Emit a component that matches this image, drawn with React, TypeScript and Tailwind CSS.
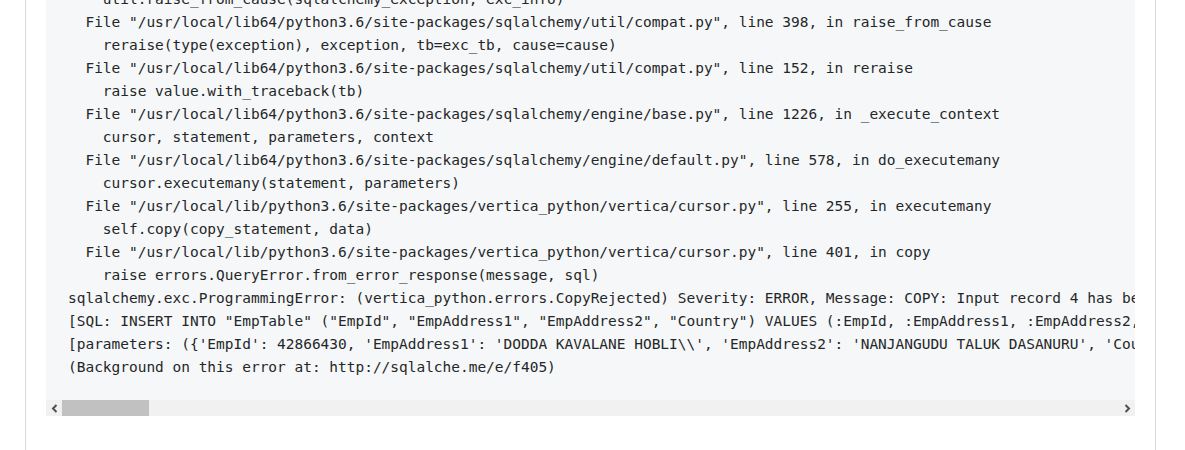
const lines = [
  "    util.raise_from_cause(sqlalchemy_exception, exc_info)",
  '  File "/usr/local/lib64/python3.6/site-packages/sqlalchemy/util/compat.py", line 398, in raise_from_cause',
  "    reraise(type(exception), exception, tb=exc_tb, cause=cause)",
  '  File "/usr/local/lib64/python3.6/site-packages/sqlalchemy/util/compat.py", line 152, in reraise',
  "    raise value.with_traceback(tb)",
  '  File "/usr/local/lib64/python3.6/site-packages/sqlalchemy/engine/base.py", line 1226, in _execute_context',
  "    cursor, statement, parameters, context",
  '  File "/usr/local/lib64/python3.6/site-packages/sqlalchemy/engine/default.py", line 578, in do_executemany',
  "    cursor.executemany(statement, parameters)",
  '  File "/usr/local/lib/python3.6/site-packages/vertica_python/vertica/cursor.py", line 255, in executemany',
  "    self.copy(copy_statement, data)",
  '  File "/usr/local/lib/python3.6/site-packages/vertica_python/vertica/cursor.py", line 401, in copy',
  "    raise errors.QueryError.from_error_response(message, sql)",
  "sqlalchemy.exc.ProgrammingError: (vertica_python.errors.CopyRejected) Severity: ERROR, Message: COPY: Input record 4 has been rejected (Too few columns found), Sqlstate: 22V04, Routine: bulkInsertRows, Error Code: 2035",
  '[SQL: INSERT INTO "EmpTable" ("EmpId", "EmpAddress1", "EmpAddress2", "Country") VALUES (:EmpId, :EmpAddress1, :EmpAddress2, :Country)]',
  "[parameters: ({'EmpId': 42866430, 'EmpAddress1': 'DODDA KAVALANE HOBLI\\\\', 'EmpAddress2': 'NANJANGUDU TALUK DASANURU', 'Country': 'INDIA'}, ...)]",
  "(Background on this error at: http://sqlalche.me/e/f405)",
];

export default function App() {
  return (
    <div className="w-full h-[450px] overflow-hidden bg-white">
      <div className="ml-[25px] w-[1131px] h-[480px] -mt-[12px] border-x border-[#d6d9dc] px-[20px]">
        {/* code block */}
        <div className="bg-[#f6f7f8]">
          <pre
            className="overflow-hidden px-[22px] pt-0 pb-[21px] text-[14.48px] leading-[23px] text-[#242729]"
            style={{ fontFamily: '"DejaVu Sans Mono", "Liberation Mono", monospace' }}
          >
            {lines.map((l, i) => (
              <div key={i} className="whitespace-pre">
                {l}
              </div>
            ))}
          </pre>

          {/* scrollbar */}
          <div className="flex h-[16px] bg-[#f1f1f1]">
            <div className="w-[16px] flex items-center justify-center">
              <svg width="7" height="9" viewBox="0 0 7 9">
                <path d="M5.5 1 L2 4.5 L5.5 8" fill="none" stroke="#505050" strokeWidth="2" />
              </svg>
            </div>
            <div className="flex-1">
              <div className="w-[87px] h-full bg-[#c1c1c1]" />
            </div>
            <div className="w-[16px] flex items-center justify-center">
              <svg width="7" height="9" viewBox="0 0 7 9">
                <path d="M1.5 1 L5 4.5 L1.5 8" fill="none" stroke="#505050" strokeWidth="2" />
              </svg>
            </div>
          </div>
        </div>
      </div>
    </div>
  );
}
